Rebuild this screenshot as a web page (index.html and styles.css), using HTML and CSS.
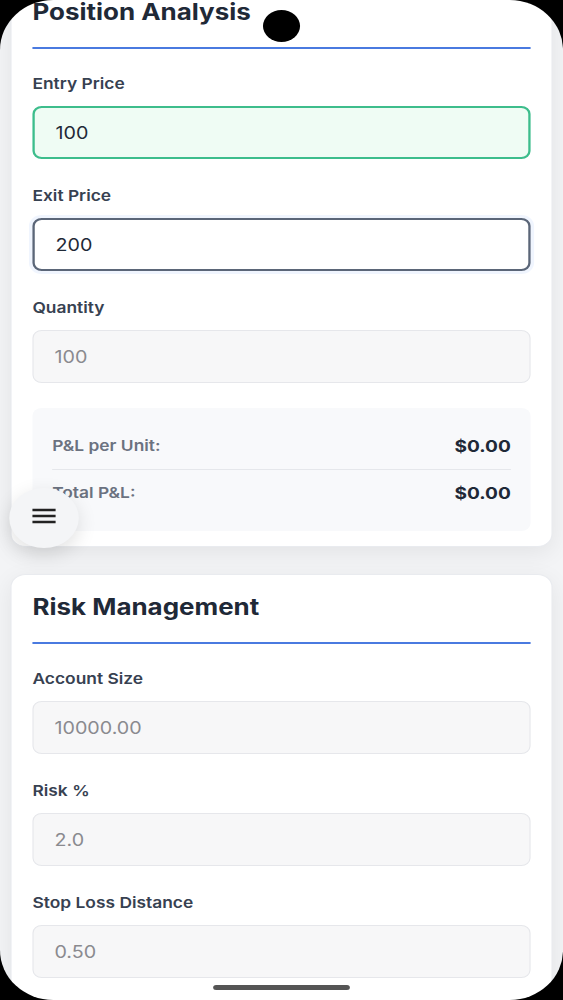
FILE: index.html
```html
<!DOCTYPE html>
<html lang="en">
<head>
    <meta charset="UTF-8">
    <meta name="viewport" content="width=device-width, initial-scale=1.0">
    <title>Position Calculator</title>
    <link rel="stylesheet" href="styles.css">
</head>
<body>
    <div class="screen">
        <div class="page">
            <div class="card first">
                <div class="heading">Position Analysis</div>

                <div class="field">
                    <label>Entry Price</label>
                    <input type="text" class="box entry" value="100">
                </div>
                <div class="field">
                    <label>Exit Price</label>
                    <input type="text" class="box exit" value="200">
                </div>
                <div class="field">
                    <label>Quantity</label>
                    <input type="text" class="box" value="100" readonly>
                </div>

                <div class="results">
                    <div class="row">
                        <span class="name">P&amp;L per Unit:</span>
                        <span class="value">$0.00</span>
                    </div>
                    <div class="row">
                        <span class="name">Total P&amp;L:</span>
                        <span class="value">$0.00</span>
                    </div>
                </div>
            </div>

            <div class="card">
                <div class="heading">Risk Management</div>

                <div class="field">
                    <label>Account Size</label>
                    <input type="text" class="box" value="10000.00" readonly>
                </div>
                <div class="field">
                    <label>Risk %</label>
                    <input type="text" class="box" value="2.0" readonly>
                </div>
                <div class="field">
                    <label>Stop Loss Distance</label>
                    <input type="text" class="box" value="0.50" readonly>
                </div>
            </div>
        </div>

        <button class="menu">
            <svg width="22" height="22" viewBox="0 0 22 22">
                <path d="M1 5h20M1 11h20M1 17h20" stroke="#222" stroke-width="2.5" fill="none"/>
            </svg>
        </button>

        <div class="frame"></div>
        <div class="camera"></div>
        <div class="homebar"></div>
    </div>
</body>
</html>
```

FILE: styles.css
```css
*{
    margin:0;
    padding:0;
    box-sizing:border-box;
}

body{
    background-color:#f3f4f6;
    font-family:Inter, "Noto Sans", sans-serif;
    color:#1f2937;
    overflow:hidden;
}

/* the capture is stretched sideways, so the whole screen is too */
.screen{
    position:relative;
    width:486px;
    height:1000px;
    overflow:hidden;
    transform:scaleX(1.1585);
    transform-origin:left top;
}

.page{
    padding:0 9px;
}

.card{
    background-color:#fff;
    border:1px solid #e9ebef;
    border-radius:13px;
    box-shadow:0 6px 22px rgba(0,0,0,0.07);
    padding:17px 18px 15px;
    margin-bottom:27px;
}

.first{
    margin-top:-21px;
}

.heading{
    font:700 22.4px/29px Inter, sans-serif;
    color:#1f2937;
    padding-bottom:21px;
    border-bottom:2px solid #4a7ae0;
    margin-bottom:25px;
}

.field{
    margin-bottom:27px;
}

.field label{
    display:block;
    font:600 15px/20px Inter, sans-serif;
    color:#374151;
    margin-bottom:12px;
}

.box{
    display:block;
    width:100%;
    height:53px;
    padding:0 18px;
    font:400 17px Inter, sans-serif;
    color:#8a8a8f;
    background-color:#f7f7f8;
    border:1.5px solid #e6e7eb;
    border-radius:8px;
    outline:none;
}

.entry{
    color:#1f2937;
    background-color:#effcf4;
    border:2px solid #3dbd8c;
}

.exit{
    color:#1f2937;
    background-color:#fff;
    border:2px solid #5b6678;
    box-shadow:0 0 0 3px rgba(59,130,246,0.08);
}

.results{
    margin-top:-2px;
    background-color:#f8f9fb;
    border-radius:8px;
    padding:15px 17px;
}

.row{
    display:flex;
    justify-content:space-between;
    align-items:center;
    padding:11px 0;
}

.row + .row{
    border-top:1px solid #e5e7eb;
}

.name{
    font:600 15px/24px Inter, sans-serif;
    color:#6b7280;
}

.value{
    font:700 16.5px/24px Inter, sans-serif;
    color:#1f2937;
}

/* floating menu button, sits over the card */
.menu{
    position:absolute;
    left:8px;
    top:488px;
    width:60px;
    height:60px;
    border:none;
    border-radius:50%;
    background-color:#f4f5f7;
    box-shadow:0 6px 18px rgba(0,0,0,0.12);
    display:flex;
    justify-content:center;
    align-items:center;
}

.menu svg{
    margin-top:-4px;
}

/* phone screen edges */
.frame{
    position:absolute;
    top:0;
    left:0;
    right:0;
    bottom:0;
    border-radius:46px / 50px;
    box-shadow:0 0 0 80px #000;
    pointer-events:none;
}

.camera{
    position:absolute;
    left:227px;
    top:10px;
    width:32px;
    height:32px;
    border-radius:50%;
    background-color:#000;
}

.homebar{
    position:absolute;
    left:184px;
    bottom:10px;
    width:118px;
    height:5px;
    border-radius:3px;
    background-color:#555;
}
```
